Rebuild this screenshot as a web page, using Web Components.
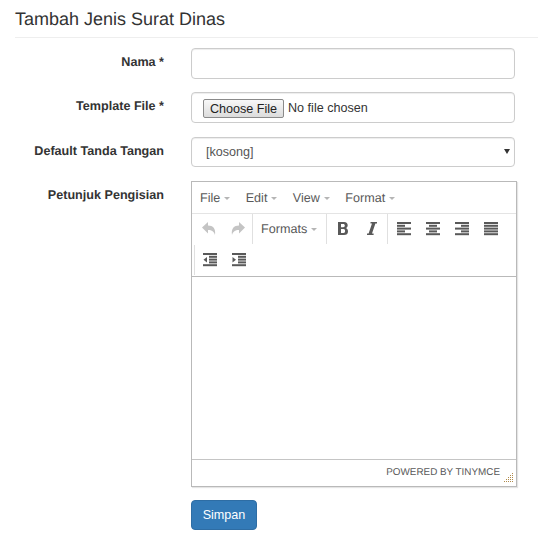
<!DOCTYPE html>
<html>
<head>
<meta charset="utf-8">
<style>
  html, body { margin: 0; padding: 0; background: #fff; }
  body { font-family: "Liberation Sans", Arial, sans-serif; font-size: 12.6px; color: #333; overflow: hidden; text-rendering: geometricPrecision; }
</style>
</head>
<body>
<surat-form>
  <form-row label="Nama *"><input-box></input-box></form-row>
  <form-row label="Template File *"><file-box></file-box></form-row>
  <form-row label="Default Tanda Tangan"><select-box></select-box></form-row>
  <form-row label="Petunjuk Pengisian"><mce-editor></mce-editor></form-row>
</surat-form>

<script>
const ICONS = {
  undo: '<path fill="#c4c4c4" d="M1 6.5 L7 1 V4.5 C12 4.5 15 7.5 14 14 C13 10.5 11 9 7 9 V12.5 Z"/>',
  redo: '<path fill="#c4c4c4" d="M15 6.5 L9 1 V4.5 C4 4.5 1 7.5 2 14 C3 10.5 5 9 9 9 V12.5 Z"/>',
  bold: '<path fill="#595959" fill-rule="evenodd" d="M3 1 H9 C11.6 1 12.7 2.6 12.7 4.2 C12.7 5.6 12 6.6 10.8 7 C12.2 7.4 13 8.7 13 10.4 C13 12.6 11.6 14 9 14 H3 Z M6 3 V6.2 H8.2 C9.3 6.2 9.8 5.5 9.8 4.6 C9.8 3.7 9.3 3 8.2 3 Z M6 8 V12 H8.5 C9.6 12 10.1 11.2 10.1 10 C10.1 8.8 9.6 8 8.5 8 Z"/>',
  italic: '<path fill="#595959" d="M6.5 1 H13 V2.6 H11.4 L8 12.4 H9.6 V14 H3 V12.4 H4.6 L8 2.6 H6.5 Z"/>',
  left: bars([[1,15],[1,9],[1,15],[1,9],[1,15]]),
  center: bars([[1,15],[4,12],[1,15],[4,12],[1,15]]),
  right: bars([[1,15],[7,15],[1,15],[7,15],[1,15]]),
  justify: bars([[1,15],[1,15],[1,15],[1,15],[1,15]]),
  outdent: indentBars('<path fill="#595959" d="M5 5 V10.5 L1.5 7.8 Z"/>'),
  indent: indentBars('<path fill="#595959" d="M1.5 5 V10.5 L5 7.8 Z"/>')
};

function bars (rows) {
  return rows.map((r, i) =>
    `<rect x="${r[0]}" y="${1 + i * 2.8}" width="${r[1] - r[0]}" height="2" fill="#595959"/>`).join('');
}

function indentBars (arrow) {
  return bars([[1,15],[7,15],[7,15],[7,15],[1,15]]) + arrow;
}

class SuratForm extends HTMLElement {
  constructor () {
    super();
    this.attachShadow({ mode: 'open' }).innerHTML = /*html*/`
    <style>
      :host { display: block; padding: 0 0 0 15px; }
      h1 { margin: 0; padding: 10px 0 8px; font: 400 18px/19px "Liberation Sans", Arial, sans-serif; color: #333; border-bottom: 1px solid #eee; }
      .rows { display: flex; flex-direction: column; padding-top: 10px; }
      .actions { padding: 0 0 0 176px; margin-top: -1px; }
      button { display: block; width: 66px; height: 30px; padding: 0; background: #337ab7; border: 1px solid #2e6da4; border-radius: 4px; color: #fff; font: 12.6px "Liberation Sans", Arial, sans-serif; }
    </style>
    <h1>Tambah Jenis Surat Dinas</h1>
    <div class="rows"><slot></slot></div>
    <div class="actions"><button type="button">Simpan</button></div>`;
  }
}

class FormRow extends HTMLElement {
  constructor () {
    super();
    this.attachShadow({ mode: 'open' }).innerHTML = /*html*/`
    <style>
      :host { display: grid; grid-template-columns: 149px 1fr; column-gap: 27px; margin-bottom: 13.8px; }
      label { font: 700 12.6px/16px "Liberation Sans", Arial, sans-serif; color: #333; text-align: right; padding-top: 5.9px; }
      .field { width: 326px; }
    </style>
    <label></label>
    <div class="field"><slot></slot></div>`;
  }
  connectedCallback () {
    this.shadowRoot.querySelector('label').textContent = this.getAttribute('label');
  }
}

const boxStyle = `
  :host { display: block; width: 324px; position: relative; }
  .box { box-sizing: border-box; width: 324px; height: 30.6px; border: 1px solid #ccc; border-radius: 4px; background: #fff; box-shadow: inset 0 1px 1px rgba(0,0,0,.075); }
`;

class InputBox extends HTMLElement {
  constructor () {
    super();
    this.attachShadow({ mode: 'open' }).innerHTML = /*html*/`
    <style>${boxStyle} input { display: block; outline: none; padding: 0 12px; }</style>
    <input class="box" type="text">`;
  }
}

class FileBox extends HTMLElement {
  constructor () {
    super();
    this.attachShadow({ mode: 'open' }).innerHTML = /*html*/`
    <style>${boxStyle}
      .box { padding: 5.6px 11px 0; }
      input { display: block; font: 12.6px/19px "Liberation Sans", Arial, sans-serif; color: #333; }
      input::file-selector-button {
        box-sizing: border-box; width: 81px; height: 19px; margin: 0 4px 0 0; padding: 0; vertical-align: -1px;
        font: 12.6px "Liberation Sans", Arial, sans-serif; color: #222;
        border: 1px solid #8a8a8a; border-radius: 2px;
        background: linear-gradient(#f8f8f8, #dcdcdc);
      }
    </style>
    <div class="box"><input type="file"></div>`;
  }
}

class SelectBox extends HTMLElement {
  constructor () {
    super();
    this.attachShadow({ mode: 'open' }).innerHTML = /*html*/`
    <style>${boxStyle}
      select { display: block; appearance: none; padding: 0 14px; font: 12.6px "Liberation Sans", Arial, sans-serif; color: #555; outline: none; }
      .arrow { position: absolute; left: 312.5px; top: 12px; width: 0; height: 0; border-left: 3px solid transparent; border-right: 3px solid transparent; border-top: 5px solid #333; }
    </style>
    <select class="box"><option>[kosong]</option></select>
    <div class="arrow"></div>`;
  }
}

class MceButton extends HTMLElement {
  constructor () {
    super();
    this.attachShadow({ mode: 'open' }).innerHTML = /*html*/`
    <style>
      :host { display: block; width: 29px; height: 30px; }
      svg { display: block; margin: 7px 0 0 7px; width: 16px; height: 16px; }
    </style>
    <svg viewBox="0 0 16 16">${ICONS[this.getAttribute('icon')]}</svg>`;
  }
}

class MceCaretLabel extends HTMLElement {
  constructor () {
    super();
    this.attachShadow({ mode: 'open' }).innerHTML = /*html*/`
    <style>
      :host { display: inline-flex; align-items: center; gap: 4px; font: 12.6px/16px "Liberation Sans", Arial, sans-serif; color: #595959; white-space: nowrap; }
      i { width: 0; height: 0; border-left: 3.5px solid transparent; border-right: 3.5px solid transparent; border-top: 3.5px solid #b5b5b5; margin-top: 1px; }
    </style>
    <slot></slot><i></i>`;
  }
}

class MceEditor extends HTMLElement {
  constructor () {
    super();
    this.attachShadow({ mode: 'open' }).innerHTML = /*html*/`
    <style>
      :host { display: block; box-sizing: border-box; width: 326px; height: 306px; border: 1px solid #b9b9b9; box-shadow: 1px 1px 1px rgba(0,0,0,.1); background: #fff; }
      .menubar { box-sizing: border-box; height: 32px; display: flex; align-items: center; gap: 15.4px; padding: 0 0 0 8px; border-bottom: 1px solid #e4e4e4; }
      .toolbar { box-sizing: border-box; height: 63px; border-bottom: 1px solid #b9b9b9; }
      .line { display: flex; height: 31px; padding-left: 2px; }
      .group { display: flex; border-right: 1px solid #e0e0e0; height: 30px; padding: 0 1px; }
      .group.first { padding: 0; }
      .group:last-child { border-right: 0; }
      .line2 .group { border-left: 1px solid #e0e0e0; padding: 0; }
      .formats { padding: 0 9px 0 8px; display: flex; align-items: center; height: 30px; margin: 0 -1px; }
      .content { height: 182px; }
      .status { box-sizing: border-box; height: 27px; border-top: 1px solid #c5c5c5; display: flex; justify-content: flex-end; align-items: center; padding: 0 0 2px; font: 9.9px "Liberation Sans", Arial, sans-serif; color: #595959; position: relative; }
      .status span { margin-right: 16px; }
      .grip { position: absolute; right: 2px; bottom: 3px; width: 10px; height: 10px; }
    </style>
    <div class="menubar">
      <mce-caret-label>File</mce-caret-label>
      <mce-caret-label>Edit</mce-caret-label>
      <mce-caret-label>View</mce-caret-label>
      <mce-caret-label>Format</mce-caret-label>
    </div>
    <div class="toolbar">
      <div class="line">
        <div class="group first">
          <mce-button icon="undo"></mce-button>
          <mce-button icon="redo"></mce-button>
        </div>
        <div class="group"><div class="formats"><mce-caret-label>Formats</mce-caret-label></div></div>
        <div class="group">
          <mce-button icon="bold"></mce-button>
          <mce-button icon="italic"></mce-button>
        </div>
        <div class="group">
          <mce-button icon="left"></mce-button>
          <mce-button icon="center"></mce-button>
          <mce-button icon="right"></mce-button>
          <mce-button icon="justify"></mce-button>
        </div>
      </div>
      <div class="line line2">
        <div class="group">
          <mce-button icon="outdent"></mce-button>
          <mce-button icon="indent"></mce-button>
        </div>
      </div>
    </div>
    <div class="content"></div>
    <div class="status">
      <span>POWERED BY TINYMCE</span>
      <svg class="grip" viewBox="0 0 10 10">
        <g fill="#b08a4a">
          <rect x="8" y="0" width="1" height="1"/>
          <rect x="6" y="2" width="1" height="1"/><rect x="8" y="2" width="1" height="1"/>
          <rect x="4" y="4" width="1" height="1"/><rect x="6" y="4" width="1" height="1"/><rect x="8" y="4" width="1" height="1"/>
          <rect x="2" y="6" width="1" height="1"/><rect x="4" y="6" width="1" height="1"/><rect x="6" y="6" width="1" height="1"/><rect x="8" y="6" width="1" height="1"/>
          <rect x="0" y="8" width="1" height="1"/><rect x="2" y="8" width="1" height="1"/><rect x="4" y="8" width="1" height="1"/><rect x="6" y="8" width="1" height="1"/><rect x="8" y="8" width="1" height="1"/>
        </g>
      </svg>
    </div>`;
  }
}

customElements.define('surat-form', SuratForm);
customElements.define('form-row', FormRow);
customElements.define('input-box', InputBox);
customElements.define('file-box', FileBox);
customElements.define('select-box', SelectBox);
customElements.define('mce-button', MceButton);
customElements.define('mce-caret-label', MceCaretLabel);
customElements.define('mce-editor', MceEditor);
</script>
</body>
</html>
